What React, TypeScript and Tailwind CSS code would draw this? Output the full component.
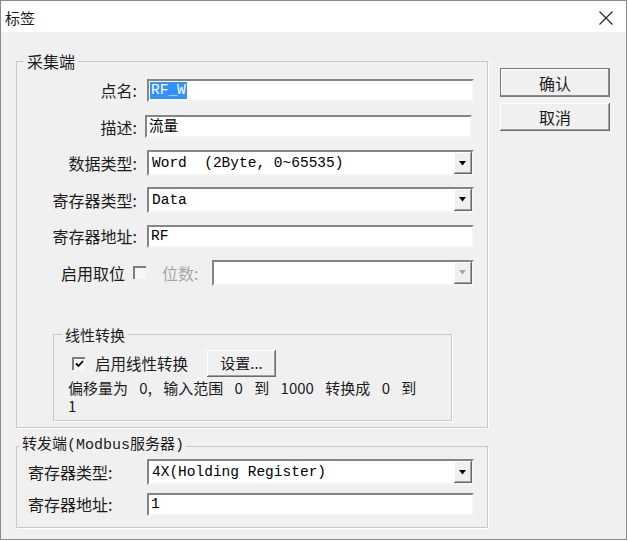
import React from "react";

const sunken =
  "bg-white border-2 border-t-[#858585] border-l-[#858585] border-r-[#f4f4f4] border-b-[#f4f4f4]";
const mono =
  "font-['Liberation_Mono','Noto_Sans_CJK_SC',monospace] text-[14.5px] leading-[20px] text-black whitespace-pre";

const Arrow: React.FC<{ disabled?: boolean }> = ({ disabled }) => (
  <div className="w-[18px] h-full bg-[#f0f0f0] flex items-center justify-center shadow-[inset_-1px_-1px_0_#6a6a6a,inset_1px_1px_0_#ffffff,inset_-2px_-2px_0_#a0a0a0]">
    <svg width="8" height="5" viewBox="0 0 8 5">
      <path d="M0 0H7L3.5 4.5Z" fill={disabled ? "#a8a8a8" : "#000"} />
    </svg>
  </div>
);

const Combo: React.FC<{ value?: string; className?: string; disabled?: boolean }> = ({
  value,
  className,
  disabled,
}) => (
  <div className={`${sunken} h-[26px] flex ${className ?? ""}`}>
    <div className={`flex-1 pl-[3px] flex items-center ${mono}`}>{value}</div>
    <Arrow disabled={disabled} />
  </div>
);

const Field: React.FC<{ children?: React.ReactNode; className?: string }> = ({ children, className }) => (
  <div className={`${sunken} h-[23px] flex items-center pl-[1px] ${mono} ${className ?? ""}`}>{children}</div>
);

const CheckBox: React.FC<{ checked?: boolean }> = ({ checked }) => (
  <div className="w-[13px] h-[13px] bg-[#f6f6f6] border-t-2 border-l-2 border-[#7d7d7d] flex items-center justify-center shrink-0">
    {checked && (
      <svg width="9" height="8" viewBox="0 0 9 8">
        <path d="M1 3.5L3.5 6L8 1" stroke="#000" strokeWidth="1.8" fill="none" />
      </svg>
    )}
  </div>
);

const Label: React.FC<{ children: React.ReactNode }> = ({ children }) => (
  <div className="w-[120px] text-right text-[16px] leading-[20px] text-[#1c1c1c]">{children}</div>
);

export default function App() {
  return (
    <div className="w-[628px] h-[541px] bg-white font-['Noto_Sans_CJK_SC',sans-serif]">
      <div className="w-[627px] h-[540px] border border-[#8c8c8c] bg-[#f0f0f0] flex flex-col">
        <div className="h-[31px] bg-white flex items-center justify-between pl-[4px] pr-[13px] shrink-0">
          <span className="text-[15px] leading-[20px] text-[#1a1a1a] mt-[2px]">标签</span>
          <svg width="14" height="14" viewBox="0 0 14 14" className="mt-[2px]">
            <path d="M0.5 0.5L13.5 13.5M13.5 0.5L0.5 13.5" stroke="#222" strokeWidth="1.1" />
          </svg>
        </div>

        <div className="flex pt-[20px] pl-[15px]">
          <div className="flex flex-col">
            <fieldset className="w-[472px] h-[376px] border border-[#c9c9c9] shadow-[1px_1px_0_#ffffff]">
              <legend className="ml-[7px] px-[3px] text-[16px] leading-[18px] text-[#1c1c1c]">采集端</legend>
              <div className="pt-[8px] flex flex-col gap-[12.6px]">
                <div className="flex items-center h-[24px]">
                  <Label>点名:</Label>
                  <Field className="ml-[10px] w-[327px]">
                    <span className="bg-[#3390ff] text-white px-[1px] leading-[17px]">RF_W</span>
                  </Field>
                </div>
                <div className="flex items-center h-[24px]">
                  <Label>描述:</Label>
                  <Field className="ml-[8px] w-[327px]">
                    <span className="pl-[1px]">流量</span>
                  </Field>
                </div>
                <div className="flex items-center h-[24px]">
                  <Label>数据类型:</Label>
                  <Combo className="ml-[10px] w-[327px]" value="Word  (2Byte, 0~65535)" />
                </div>
                <div className="flex items-center h-[24px]">
                  <Label>寄存器类型:</Label>
                  <Combo className="ml-[10px] w-[327px]" value="Data" />
                </div>
                <div className="flex items-center h-[24px]">
                  <Label>寄存器地址:</Label>
                  <Field className="ml-[10px] w-[327px]">
                    <span className="pl-[1px]">RF</span>
                  </Field>
                </div>
                <div className="flex items-center h-[24px]">
                  <div className="w-[129px] flex items-center justify-end">
                    <span className="text-[16px] leading-[20px] text-[#1c1c1c] mr-[8px]">启用取位</span>
                    <CheckBox />
                  </div>
                  <span className="ml-[16px] w-[50px] text-[16px] leading-[20px] text-[#a6a6a6]">位数:</span>
                  <Combo className="w-[262px]" disabled />
                </div>
              </div>

              <fieldset className="ml-[36px] mt-[41px] w-[399px] h-[95px] border border-[#c9c9c9] shadow-[1px_1px_0_#ffffff]">
                <legend className="ml-[8px] px-[3px] text-[15px] leading-[18px] text-[#1c1c1c]">线性转换</legend>
                <div className="mt-[6px] pl-[18px] flex items-center h-[27px]">
                  <CheckBox checked />
                  <span className="ml-[10px] text-[15.5px] leading-[20px] text-[#1c1c1c]">启用线性转换</span>
                  <button className="ml-[19px] w-[69px] h-[27px] bg-[#f0f0f0] text-[15px] leading-[20px] text-[#1c1c1c] shadow-[inset_-1px_-1px_0_#6a6a6a,inset_1px_1px_0_#ffffff,inset_-2px_-2px_0_#a0a0a0]">
                    设置...
                  </button>
                </div>
                <div className="mt-[2px] pl-[14px] text-[15px] leading-[18px] text-[#1c1c1c] [word-spacing:8px]">
                  <div>偏移量为 0, 输入范围 0 到 1000 转换成 0 到</div>
                  <div>1</div>
                </div>
              </fieldset>
            </fieldset>

            <fieldset className="mt-[9px] w-[472px] h-[91px] border border-[#c9c9c9] shadow-[1px_1px_0_#ffffff]">
              <legend className="ml-[3px] px-[2px] text-[15px] leading-[18px] text-[#1c1c1c] font-['Liberation_Mono','Noto_Sans_CJK_SC',monospace]">
                转发端(Modbus服务器)
              </legend>
              <div className="pt-[5px] pl-[11px] flex flex-col gap-[8px]">
                <div className="flex items-center h-[24px]">
                  <span className="w-[119px] text-[16px] leading-[20px] text-[#1c1c1c]">寄存器类型:</span>
                  <Combo className="w-[327px]" value="4X(Holding Register)" />
                </div>
                <div className="flex items-center h-[24px]">
                  <span className="w-[119px] text-[16px] leading-[20px] text-[#1c1c1c]">寄存器地址:</span>
                  <Field className="w-[327px]">
                    <span className="pl-[1px]">1</span>
                  </Field>
                </div>
              </div>
            </fieldset>
          </div>

          <div className="ml-[12px] mt-[16px] flex flex-col gap-[6px]">
            <button className="w-[110px] h-[29px] bg-[#f0f0f0] border border-[#7a7a7a] text-[16px] leading-[20px] text-[#1c1c1c] shadow-[inset_-1px_-1px_0_#8a8a8a,inset_1px_1px_0_#ffffff]">
              确认
            </button>
            <button className="w-[110px] h-[28px] bg-[#f0f0f0] text-[16px] leading-[20px] text-[#1c1c1c] shadow-[inset_-1px_-1px_0_#6a6a6a,inset_1px_1px_0_#ffffff,inset_-2px_-2px_0_#a0a0a0]">
              取消
            </button>
          </div>
        </div>
      </div>
    </div>
  );
}
